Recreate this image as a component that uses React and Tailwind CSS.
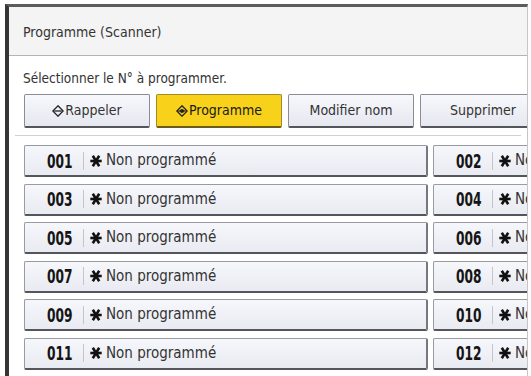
import React from "react";

const font = {
  fontFamily: '"DejaVu Sans Condensed", "DejaVu Sans", sans-serif',
};

const DiamondIcon = ({ filled }) => (
  <svg width="12" height="12" viewBox="0 0 12 12" className="shrink-0">
    <polygon
      points="6,0.8 11.2,6 6,11.2 0.8,6"
      fill="none"
      stroke="#222"
      strokeWidth="1.3"
    />
    <line x1="2.2" y1="6" x2="9.8" y2="6" stroke="#222" strokeWidth="1.3" />
    {filled && <circle cx="6" cy="6" r="2" fill="#222" />}
  </svg>
);

const Star = () => (
  <svg width="12" height="12" viewBox="0 0 12 12" className="shrink-0">
    <g stroke="#111" strokeWidth="2.6" strokeLinecap="butt">
      <line x1="0.3" y1="6" x2="11.7" y2="6" />
      <line x1="2.8" y1="0.8" x2="9.2" y2="11.2" />
      <line x1="9.2" y1="0.8" x2="2.8" y2="11.2" />
    </g>
  </svg>
);

const Button = ({ label, icon, active }) => (
  <div
    className={
      "w-[126px] h-[34px] shrink-0 flex items-center justify-center gap-[1px] rounded-[2px] border border-b-[2px] text-[14px] " +
      (active
        ? "bg-[#f8d21a] border-[#a08a2a] border-b-[#6b5a1a] text-[#1a1a1a]"
        : "bg-gradient-to-b from-[#f7f8fc] to-[#e6e8f0] border-[#8c8c94] border-b-[#55555c] text-[#333]")
    }
  >
    {icon}
    <span>{label}</span>
  </div>
);

const Card = ({ num }) => (
  <div className="w-[404px] h-[32px] shrink-0 flex items-center rounded-[2px] border border-[#9a9aa2] border-b-[2px] border-b-[#55555c] border-r-[2px] border-r-[#77777e] bg-gradient-to-b from-[#f6f7fb] to-[#e9ebf2]">
    <span className="w-[48px] flex justify-end">
      <span className="inline-block origin-right scale-x-[0.68] text-[20px] font-bold text-[#151515] leading-none">
        {num}
      </span>
    </span>
    <span className="ml-[10px] w-px h-[18px] bg-[#c4c4ca]" />
    <span className="ml-[6px] flex">
      <Star />
    </span>
    <span className="ml-[4px] text-[15px] text-[#333] whitespace-nowrap">
      Non programmé
    </span>
  </div>
);

const rows = [
  ["001", "002"],
  ["003", "004"],
  ["005", "006"],
  ["007", "008"],
  ["009", "010"],
  ["011", "012"],
];

export default function App() {
  return (
    <div
      className="w-[531px] h-[376px] bg-white overflow-hidden pt-[4px] pl-[5px]"
      style={font}
    >
      <div className="w-[523px] h-[372px] border-l-[4px] border-l-[#353535] border-t-[3px] border-t-[#5c5c5c] border-r border-r-[#c6c6c6] overflow-hidden flex flex-col">
        <div className="h-[49px] shrink-0 bg-[#f4f4f4] border-b border-[#b4b4b4] flex items-center pl-[14px] pt-[3px] text-[14px] text-[#333]">
          Programme (Scanner)
        </div>

        <div className="pt-[14px] pl-[14px] leading-[17px] text-[13.5px] text-[#333]">
          Sélectionner le N° à programmer.
        </div>

        <div className="mt-[7px] pl-[15px] flex gap-[6px]">
          <Button label="Rappeler" icon={<DiamondIcon />} />
          <Button label="Programme" icon={<DiamondIcon filled />} active />
          <Button label="Modifier nom" />
          <Button label="Supprimer" />
        </div>

        <div className="mt-[7px] mx-[6px] h-px bg-[#cfcfd4]" />

        <div className="mt-[9px] pl-[15px] flex flex-col gap-[6.5px]">
          {rows.map(([a, b]) => (
            <div key={a} className="flex gap-[5px]">
              <Card num={a} />
              <Card num={b} />
            </div>
          ))}
        </div>
      </div>
    </div>
  );
}
